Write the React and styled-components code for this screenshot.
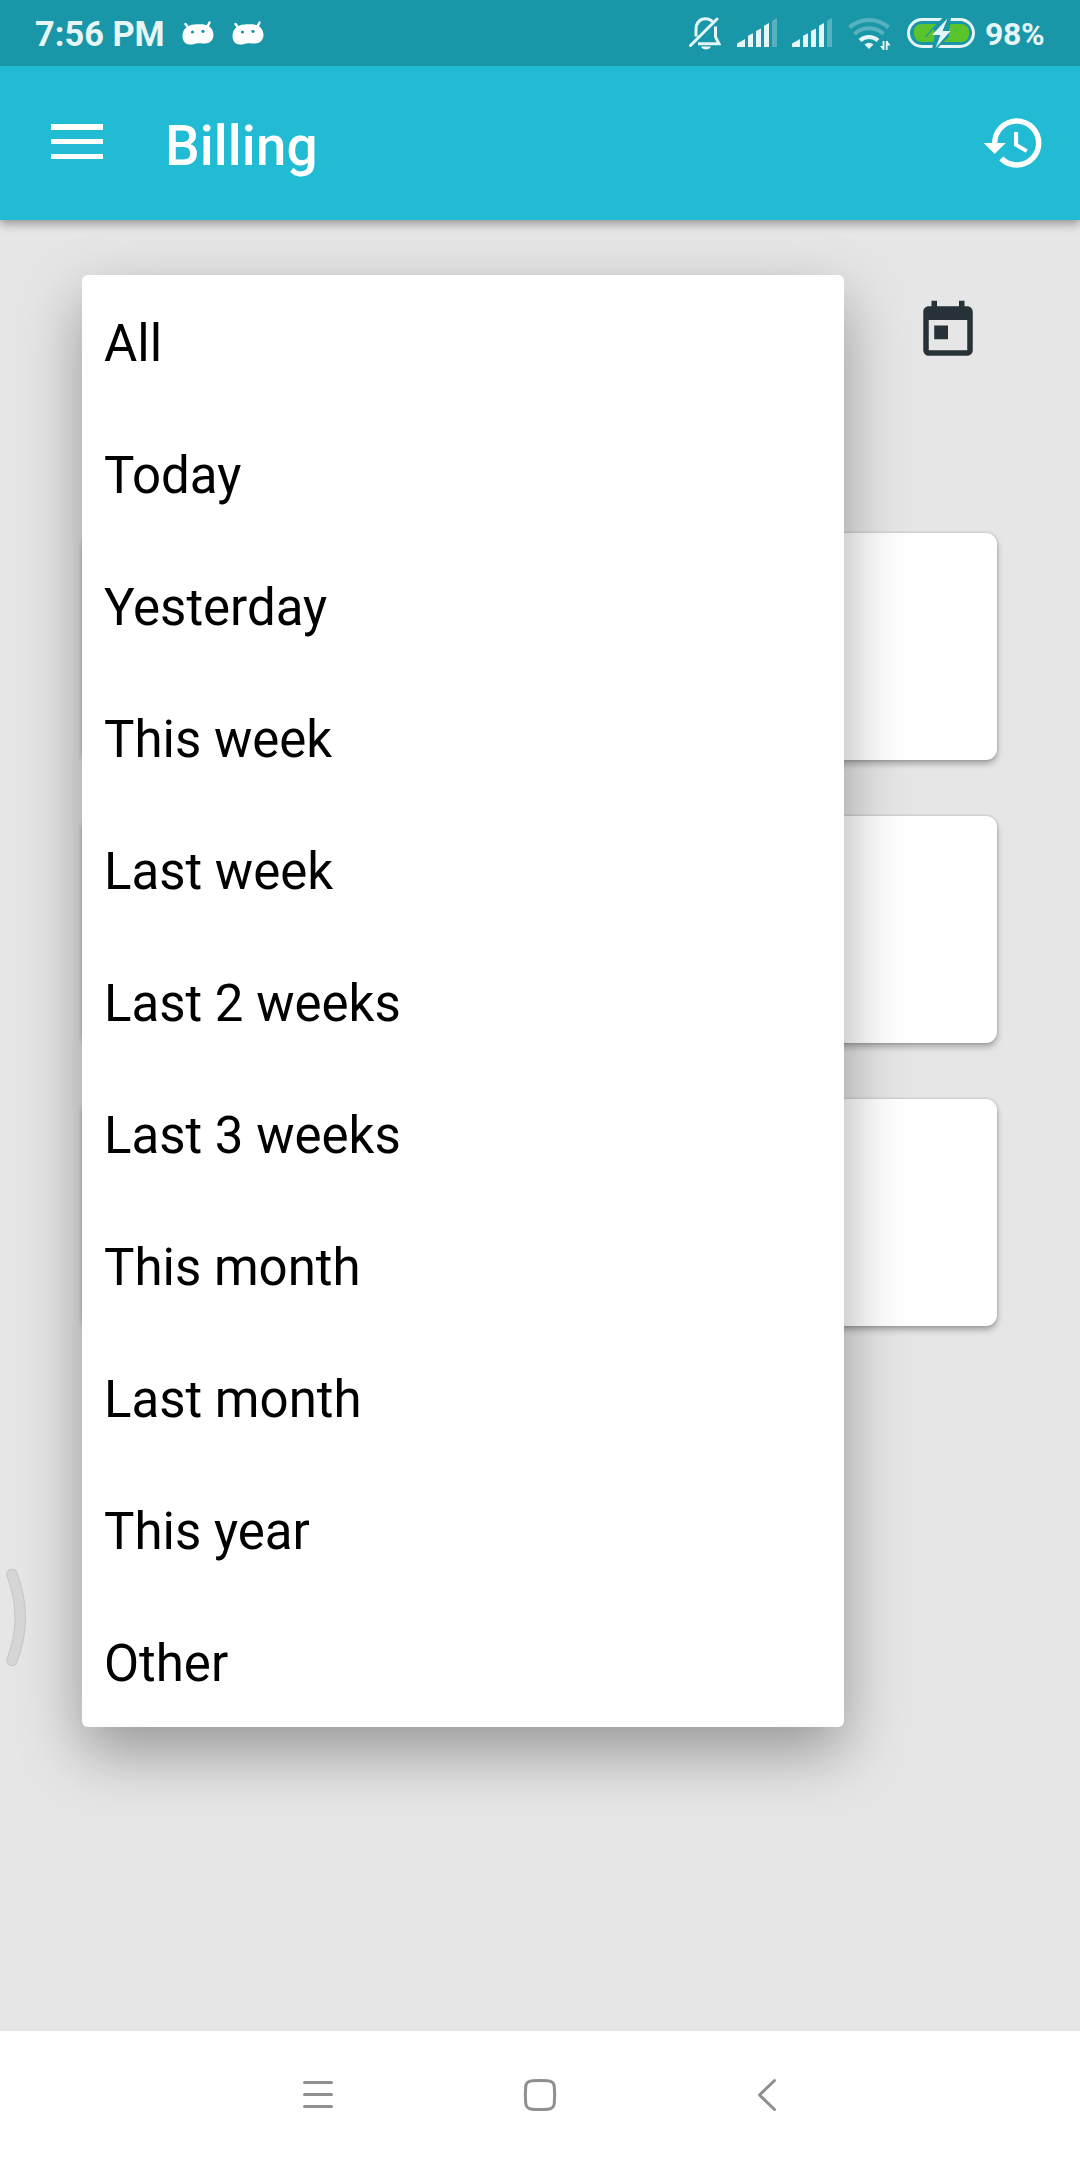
import React, { useState } from 'react'
import styled, { createGlobalStyle } from 'styled-components'
import { MdHistory, MdToday } from 'react-icons/md'

const options = [
    'All',
    'Today',
    'Yesterday',
    'This week',
    'Last week',
    'Last 2 weeks',
    'Last 3 weeks',
    'This month',
    'Last month',
    'This year',
    'Other',
]

function Droid() {
    return (
        <svg width="32" height="24" viewBox="0 0 32 24">
            <path d="M3.5 3l3 4M27.5 1.5l-2.5 5" stroke="#fff" strokeWidth="2.4" strokeLinecap="round" />
            <path
                d="M.5 15C.5 8 6 4 12 3.6c3-.3 7-.4 10-.1C28 4 31.500 9 31.500 14c0 5-4 8.500-8.500 8.500-3 0-4-.5-7-.3-3 .3-4 1.300-8 1.300C3.500 23.500.5 20 .5 15z"
                fill="#fff"
            />
            <circle cx="10.500" cy="11" r="1.600" fill="#1996a7" />
            <circle cx="21" cy="10.300" r="1.600" fill="#1996a7" />
        </svg>
    )
}

function Signal() {
    return (
        <svg width="40" height="30" viewBox="0 0 40 30" fill="#e6f5f6">
            <path d="M0 29v-3.500L8 21v8zM11 29V17.800l5-2.600V29zM19 29V13l5-2.600V29zM27 29V7.800l5-2.800V29z" />
            <path d="M35 29V2.800L40 0v29z" opacity="0.300" />
        </svg>
    )
}

function Silent() {
    return (
        <svg width="32" height="33" viewBox="0 0 32 33" fill="none" stroke="#e6f5f6" strokeWidth="3">
            <path d="M7 19.500V12C7 6 11 1.800 16.500 1.800c3 0 5.500 1.200 7 3M26.500 9.500V20l3.500 6.800H9" />
            <path d="M1.500 28.500L28 2" strokeLinecap="round" />
            <path d="M12 29.500h10c-1 2.200-3 3-5 3s-4-.8-5-3z" fill="#e6f5f6" stroke="none" />
        </svg>
    )
}

function Wifi() {
    return (
        <svg width="43" height="34" viewBox="0 0 43 34" fill="none" stroke="#e6f5f6" strokeWidth="4">
            <path d="M1.500 11.500a29 29 0 0 1 39 0M6.500 18a21.500 21.500 0 0 1 29 0" opacity="0.300" />
            <path d="M12 24.500a13 13 0 0 1 18 0" />
            <path d="M16.500 28.500a6.500 6.500 0 0 1 9 0L21 33z" fill="#e6f5f6" stroke="none" />
            <path d="M35.500 25v9M38.700 25v9" strokeWidth="1.800" />
            <path d="M32 30l3.500 4.500V30zM42.500 29.500l-3.500-5v5z" fill="#e6f5f6" stroke="none" />
        </svg>
    )
}

function Battery() {
    return (
        <svg width="68" height="32" viewBox="0 0 68 32">
            <rect x="1.500" y="2.500" width="65" height="27" rx="13.500" fill="none" stroke="#e6f5f6" strokeWidth="3" />
            <rect x="7" y="7" width="55" height="18" rx="7.500" fill="#5bc42c" />
            <path d="M36.500 0L24.500 12 18 20h9.500L25 32h4.500L50 12h-7.500L44 0z" fill="#1996a7" />
            <path d="M26 12L19 20.500h8L28.500 16zM42 11.500h8L42 21z" fill="#5bc42c" />
            <path d="M40.500 1.500L25 18h8.500L28.500 31 43.500 14H35.500z" fill="#e6f5f6" />
        </svg>
    )
}

function App() {

    const [selected, setSelected] = useState('All')

    return (
        <Screen>
            <GlobalStyle />
            <StatusBar>
                <Time>7:56 PM</Time>
                <Notifications>
                    <Droid />
                    <Droid />
                </Notifications>
                <StatusIcons>
                    <Silent />
                    <Signal />
                    <Signal />
                    <Wifi />
                    <Battery />
                </StatusIcons>
                <Percent>98%</Percent>
            </StatusBar>

            <AppBar>
                <MenuButton aria-label="Menu">
                    <Line />
                    <Line />
                    <Line />
                </MenuButton>
                <Title>Billing</Title>
                <MdHistory size={66} />
            </AppBar>

            <Content>
                <Filter>
                    <MdToday size={66} />
                    <Dropdown>
                        {options.map((option) => (
                            <Option key={option} aria-selected={option === selected} onClick={() => setSelected(option)}>
                                {option}
                            </Option>
                        ))}
                    </Dropdown>
                </Filter>
                <Card />
                <Card />
                <Card />
                <EdgeHandle width="28" height="102" viewBox="0 0 28 102">
                    <path d="M12 7.500Q28.500 51 12 93.500" stroke="#c6c6c6" strokeWidth="11.500" />
                    <path d="M12 7.500Q28.500 51 12 93.500" stroke="#d6d6d6" strokeWidth="9.500" />
                </EdgeHandle>
            </Content>

            <NavBar>
                <NavButton aria-label="Recents">
                    <svg width="32" height="34" viewBox="0 0 32 34">
                        <path d="M2.500 4.600h27M2.500 16.600h27M2.500 28.600h27" />
                    </svg>
                </NavButton>
                <NavButton aria-label="Home">
                    <svg width="34" height="34" viewBox="0 0 34 34">
                        <path d="M9 2.800Q17 2 25 2.800 31 3.200 31.300 9 32 17 31.300 25 31 30.800 25 31.200 17 32 9 31.200 3 30.800 2.700 25 2 17 2.700 9 3 3.200 9 2.800z" />
                    </svg>
                </NavButton>
                <NavButton aria-label="Back">
                    <svg width="32" height="34" viewBox="0 0 32 34">
                        <path d="M28.500 2.500L13.500 17l15 14.500" />
                    </svg>
                </NavButton>
            </NavBar>
        </Screen>
    )
}

export default App

const GlobalStyle = createGlobalStyle`
    * {
        box-sizing: border-box;
    }
    body {
        margin: 0;
        font-family: Roboto, sans-serif;
    }
    svg {
        display: block;
        flex-shrink: 0;
    }
`

const Screen = styled.div`
    width: 1080px;
    height: 2160px;
    display: flex;
    flex-direction: column;
    overflow: hidden;
    background: #e6e6e6;
`

const StatusBar = styled.div`
    height: 66px;
    flex-shrink: 0;
    display: flex;
    align-items: center;
    padding: 0 35px;
    background: #1996a7;
    color: #e6f5f6;
    font-size: 34.400px;
    font-weight: 700;
    z-index: 2;
`

const Time = styled.span`
    width: 147px;
    white-space: nowrap;
    padding-top: 2px;
`

const Notifications = styled.div`
    display: flex;
    gap: 18px;
`

const StatusIcons = styled.div`
    display: flex;
    align-items: center;
    gap: 15.800px;
    margin-left: auto;
`

const Percent = styled.span`
    width: 60px;
    margin-left: 10px;
    padding-top: 1px;
    font-size: 32px;
    letter-spacing: -0.4px;
`

const AppBar = styled.header`
    height: 154px;
    flex-shrink: 0;
    display: flex;
    align-items: center;
    padding: 0 33px 0 51px;
    background: #21bcd3;
    color: #fff;
    box-shadow: 0 3px 10px rgba(0, 0, 0, 0.4);
    z-index: 1;
`

const MenuButton = styled.button`
    width: 52px;
    height: 35px;
    display: flex;
    flex-direction: column;
    justify-content: space-between;
    padding: 0;
    margin-bottom: 3px;
    border: none;
    background: none;
`

const Line = styled.span`
    width: 100%;
    height: 5.500px;
    background: #fff;
`

const Title = styled.h1`
    flex: 1;
    margin: 5px 0 0 62px;
    font-size: 55px;
    font-weight: 500;
`

const Content = styled.main`
    flex: 1;
    position: relative;
    display: flex;
    flex-direction: column;
    gap: 56px;
    padding: 55px 83px 0;
`

const Filter = styled.div`
    position: relative;
    height: 202px;
    display: flex;
    justify-content: flex-end;
    padding: 23px 16px 0 0;
    color: #263238;
`

/* the open list covers the cards under it */
const Dropdown = styled.ul`
    position: absolute;
    top: 0;
    left: -1px;
    z-index: 2;
    width: 762px;
    margin: 0;
    padding: 0;
    list-style: none;
    border-radius: 6px;
    background: #fff;
    color: #000;
    box-shadow: 0 25px 62px rgba(0, 0, 0, 0.35);
`

const Option = styled.li`
    height: 132px;
    display: flex;
    align-items: center;
    padding: 4px 22px 0;
    font-size: 51px;
`

const Card = styled.section`
    height: 227px;
    border-radius: 11px;
    background: #fff;
    box-shadow: 0 4px 6px rgba(0, 0, 0, 0.28), 0 0 3px rgba(0, 0, 0, 0.2);
`

const EdgeHandle = styled.svg`
    position: absolute;
    left: 0;
    top: 1347px;
    fill: none;
    stroke-linecap: round;
`

const NavBar = styled.nav`
    height: 129px;
    flex-shrink: 0;
    display: flex;
    align-items: center;
    justify-content: center;
    padding-bottom: 1px;
    background: #fff;
`

const NavButton = styled.button`
    width: 222px;
    display: flex;
    justify-content: center;
    padding: 0;
    border: none;
    background: none;

    path {
        fill: none;
        stroke: #8f8f8f;
        stroke-width: 3;
        stroke-linecap: round;
        stroke-linejoin: round;
    }
`
